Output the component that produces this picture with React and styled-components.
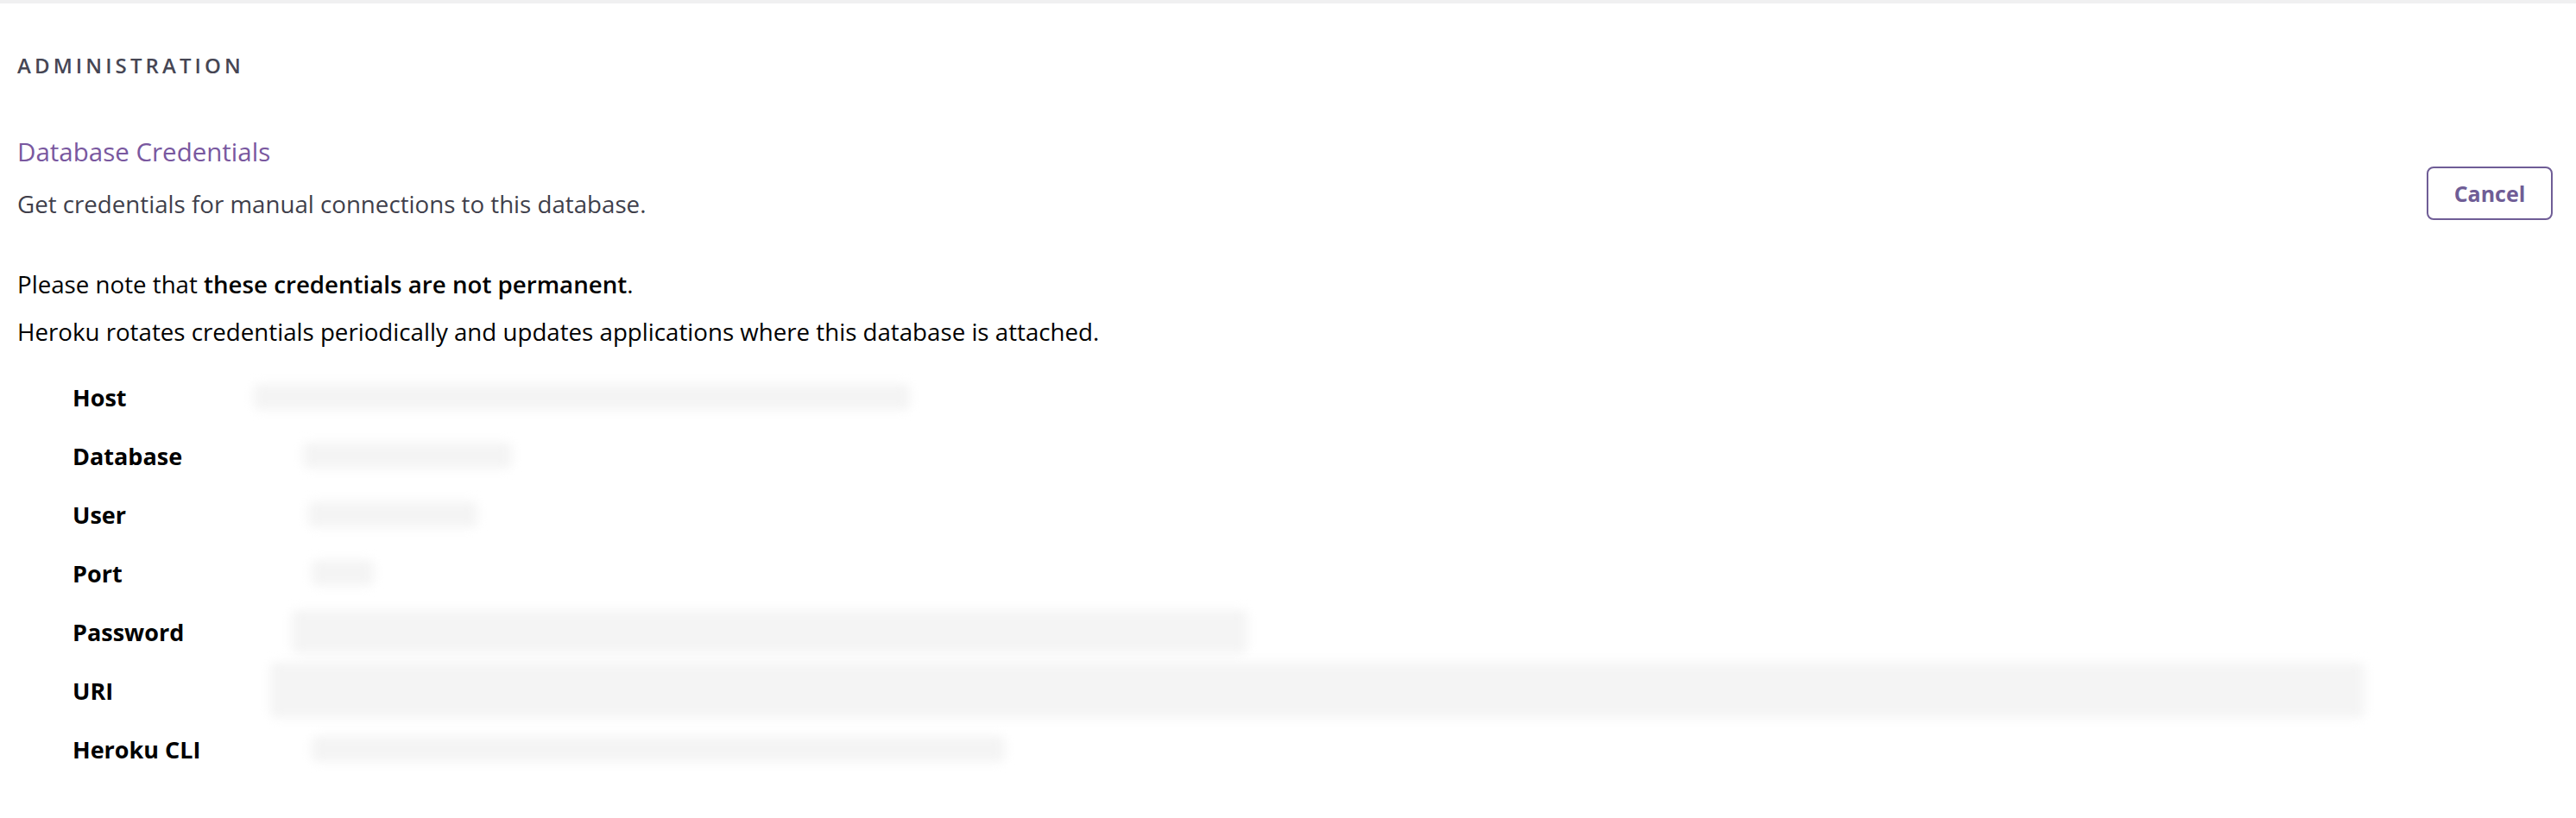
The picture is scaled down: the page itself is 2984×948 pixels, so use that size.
import React from "react";
import styled, { createGlobalStyle } from "styled-components";

const purple = "#79589f";
const buttonPurple = "#6f5d96";
const slate = "#3f3f4b";
const ink = "#000000";

const GlobalStyle = createGlobalStyle`
  html, body {
    margin: 0;
    padding: 0;
    background: #ffffff;
  }

  body {
    font-family: "Open Sans", Lato, "Liberation Sans", sans-serif;
    -webkit-font-smoothing: antialiased;
  }
`;

const Page = styled.div`
  border-top: 4px solid #f0f0f1;
  padding: 56px 27px 40px 20px;
`;

const SectionTitle = styled.h2`
  margin: 0;
  font-size: 24px;
  line-height: 32px;
  font-weight: 600;
  letter-spacing: 4.1px;
  color: #464654;
`;

const HeaderRow = styled.div`
  display: flex;
  justify-content: space-between;
  align-items: flex-start;
  margin-top: 64px;
`;

const Heading = styled.h3`
  margin: 0;
  font-size: 29.5px;
  line-height: 40px;
  font-weight: 400;
  color: ${purple};
`;

const Description = styled.p`
  margin: 20px 0 0;
  font-size: 27.7px;
  line-height: 40px;
  color: ${slate};
`;

const CancelButton = styled.button`
  margin-top: 37px;
  width: 146px;
  height: 62px;
  border: 2px solid ${buttonPurple};
  border-radius: 8px;
  background: #ffffff;
  color: ${buttonPurple};
  font-family: inherit;
  font-size: 25px;
  font-weight: 700;
  cursor: pointer;
`;

const Notice = styled.p`
  margin: ${(p) => (p.$first ? "53px" : "15px")} 0 0;
  font-size: 27.7px;
  line-height: 40px;
  color: ${ink};

  strong {
    font-weight: 600;
  }
`;

const CredentialList = styled.dl`
  display: grid;
  grid-template-columns: 210px 1fr;
  grid-auto-rows: 68px;
  align-items: center;
  margin: 22px 0 0 64px;
`;

const Label = styled.dt`
  font-size: 27px;
  font-weight: 700;
  color: ${ink};
`;

const Value = styled.dd`
  margin: 0;
  display: flex;
  align-items: center;
  height: 100%;
`;

const Redacted = styled.div`
  margin-left: ${(p) => p.$offset}px;
  width: ${(p) => p.$width}px;
  height: ${(p) => p.$height || 30}px;
  background: #f4f4f4;
  border-radius: 6px;
  filter: blur(6px);
`;

const credentials = [
  { label: "Host", offset: 0, width: 760 },
  { label: "Database", offset: 57, width: 242 },
  { label: "User", offset: 63, width: 196 },
  { label: "Port", offset: 67, width: 72 },
  { label: "Password", offset: 44, width: 1107, height: 50 },
  { label: "URI", offset: 19, width: 2426, height: 64 },
  { label: "Heroku CLI", offset: 67, width: 803 },
];

const App = () => (
  <>
    <GlobalStyle />
    <Page>
      <SectionTitle>ADMINISTRATION</SectionTitle>

      <HeaderRow>
        <div>
          <Heading>Database Credentials</Heading>
          <Description>
            Get credentials for manual connections to this database.
          </Description>
        </div>
        <CancelButton>Cancel</CancelButton>
      </HeaderRow>

      <Notice $first>
        Please note that <strong>these credentials are not permanent</strong>.
      </Notice>
      <Notice>
        Heroku rotates credentials periodically and updates applications where
        this database is attached.
      </Notice>

      <CredentialList>
        {credentials.map((c) => (
          <React.Fragment key={c.label}>
            <Label>{c.label}</Label>
            <Value>
              <Redacted $offset={c.offset} $width={c.width} $height={c.height} />
            </Value>
          </React.Fragment>
        ))}
      </CredentialList>
    </Page>
  </>
);

export default App;
